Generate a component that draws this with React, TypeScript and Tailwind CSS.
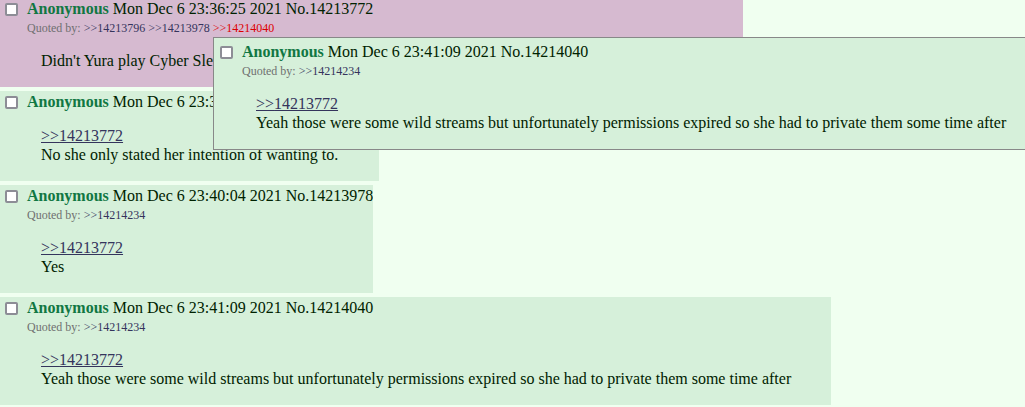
import React from 'react';

type Post = {
  no: string;
  time: string;
  quotedBy?: { no: string; hot?: boolean }[];
  quote?: string;
  body: string;
};

const posts: (Post & { highlight?: boolean; width?: string })[] = [
  {
    no: '14213772',
    time: 'Mon Dec 6 23:36:25 2021',
    quotedBy: [{ no: '14213796' }, { no: '14213978' }, { no: '14214040', hot: true }],
    body: "Didn't Yura play Cyber Sleuth on stream at some point? I remember seeing a VOD of it",
    highlight: true,
    width: 'w-[743px]',
  },
  {
    no: '14213796',
    time: 'Mon Dec 6 23:38:47 2021',
    quote: '14213772',
    body: 'No she only stated her intention of wanting to.',
    width: 'w-[379px]',
  },
  {
    no: '14213978',
    time: 'Mon Dec 6 23:40:04 2021',
    quotedBy: [{ no: '14214234' }],
    quote: '14213772',
    body: 'Yes',
  },
  {
    no: '14214040',
    time: 'Mon Dec 6 23:41:09 2021',
    quotedBy: [{ no: '14214234' }],
    quote: '14213772',
    body: 'Yeah those were some wild streams but unfortunately permissions expired so she had to private them some time after',
  },
];

const PostContent: React.FC<{ post: Post }> = ({ post }) => (
  <>
    <div className="flex items-center h-[20px] whitespace-nowrap">
      <span className="ml-[4px] mr-[9px] w-[13px] h-[13px] shrink-0 rounded-[2px] border-2 border-[#8d8d96] bg-white" />
      <span className="font-bold text-[#117743]">Anonymous</span>
      <span>&nbsp;{post.time}&nbsp;</span>
      <span>No.{post.no}</span>
    </div>
    {post.quotedBy && (
      <div className="h-[18px] pl-[26px] text-[12px] leading-[18px] whitespace-nowrap text-[#707070]">
        Quoted by:{' '}
        {post.quotedBy.map((q, i) => (
          <span key={q.no} className={q.hot ? 'text-[#dd0000]' : 'text-[#34345c]'}>
            {i > 0 ? ' ' : ''}&gt;&gt;{q.no}
          </span>
        ))}
      </div>
    )}
    <blockquote className="mt-[14px] mb-[16px] ml-[40px] mr-[40px] leading-[19px]">
      {post.quote && (
        <div>
          <a className="underline text-[#34345c]">&gt;&gt;{post.quote}</a>
        </div>
      )}
      <div className="whitespace-nowrap">{post.body}</div>
    </blockquote>
  </>
);

export default function App() {
  const preview = posts[3];
  return (
    <div
      className="relative w-[1025px] h-[407px] overflow-hidden bg-[#f0fff0] text-[16px] text-[#002200]"
      style={{ fontFamily: '"Liberation Serif", "Times New Roman", serif' }}
    >
      <div className="-mt-[2px] flex flex-col items-start gap-[4px]">
        {posts.map((p) => (
          <div
            key={p.no}
            className={`${p.width ?? 'w-fit'} overflow-hidden pt-[1px] pb-[1px] pl-[1px] ${p.highlight ? 'bg-[#d6bad0]' : 'bg-[#d6f0da]'}`}
          >
            <PostContent post={p} />
          </div>
        ))}
      </div>

      {/* hover preview */}
      <div className="absolute left-[213px] top-[37px] w-max border border-[#888888] bg-[#d6f0da] pt-[4px] pb-[1px] pl-[2px]">
        <PostContent post={preview} />
      </div>
    </div>
  );
}
